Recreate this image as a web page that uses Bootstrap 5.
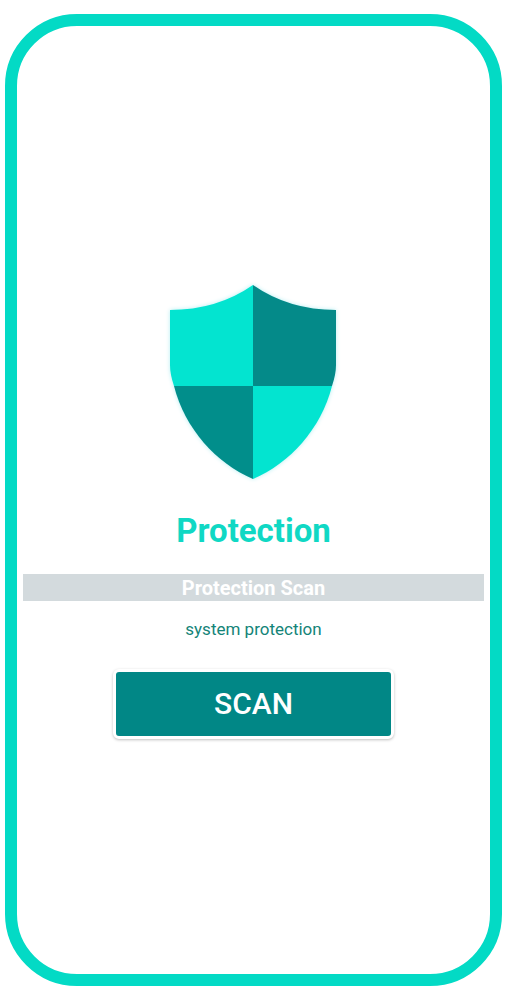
<!DOCTYPE html>
<html lang="en">
<head>
<meta charset="utf-8">
<meta name="viewport" content="width=device-width, initial-scale=1">
<title>Protection</title>
<link href="https://cdn.jsdelivr.net/npm/bootstrap@5.3.0/dist/css/bootstrap.min.css" rel="stylesheet">
<style>
  body { font-family: Roboto, "Liberation Sans", sans-serif; background: #fff; }
  .screen { padding: 14px 5px; }
  .phone { border: 12px solid #03dac5; border-radius: 72px; padding: 22px 6px 0; }
  .shield { width: 167px; height: 196px; filter: drop-shadow(0 0 2px #b5eef2); }
  .app-name { color: #10d8c4; font-size: 33px; line-height: 40px; margin: 31px 0 23px; }
  .scan-title { background: #d3dadd; color: #fff; font-size: 20px; line-height: 25px; padding-top: 2px; }
  .scan-note { color: #148478; font-size: 17px; line-height: 24px; margin: 16px 0 28px; }
  .btn-scan {
    --bs-btn-color: #fff; --bs-btn-bg: #018786; --bs-btn-border-color: #fff;
    --bs-btn-hover-color: #fff; --bs-btn-hover-bg: #017574; --bs-btn-hover-border-color: #fff;
    --bs-btn-active-color: #fff; --bs-btn-active-bg: #016463; --bs-btn-active-border-color: #fff;
    --bs-btn-border-width: 3px; --bs-btn-border-radius: 6px;
    --bs-btn-font-size: 30px; --bs-btn-line-height: 40px; --bs-btn-font-weight: 500;
    --bs-btn-padding-y: 12px;
    width: 281px; box-shadow: 0 1px 3px rgba(0, 0, 0, .25);
  }
</style>
</head>
<body>
<div class="screen vh-100">
  <main class="phone h-100 d-flex flex-column align-items-center justify-content-center text-center">
    <svg class="shield" viewBox="0 0 167 196" role="img" aria-label="Shield">
      <path fill="#03e4d0" d="M83 1V102H4Q0 90 0 81V26Q47 26 83 1Z"/>
      <path fill="#048a89" d="M83 1V102H162Q166 90 166 81V26Q119 26 83 1Z"/>
      <path fill="#018e8b" d="M83 102H4C15 145 46 179 83 195Z"/>
      <path fill="#03e4d0" d="M83 102H162C151 145 120 179 83 195Z"/>
    </svg>
    <h1 class="app-name fw-bold">Protection</h1>
    <h2 class="scan-title fw-bold w-100 mb-0">Protection Scan</h2>
    <p class="scan-note">system protection</p>
    <button type="button" class="btn btn-scan mw-100">SCAN</button>
  </main>
</div>
<script src="https://cdn.jsdelivr.net/npm/bootstrap@5.3.0/dist/js/bootstrap.bundle.min.js"></script>
</body>
</html>
